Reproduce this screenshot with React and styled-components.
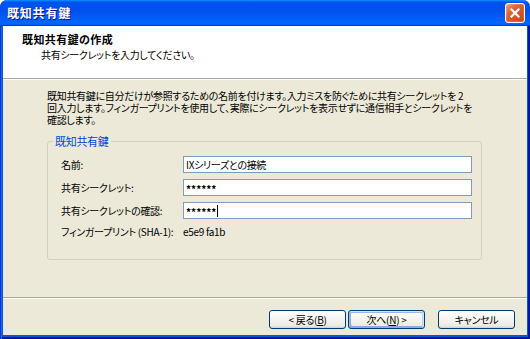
import React from 'react';
import styled, { createGlobalStyle, css } from 'styled-components';

const Global = createGlobalStyle`
  html, body { margin: 0; padding: 0; background: #fff; }
  body {
    font-family: "Noto Sans CJK JP", "Noto Sans", sans-serif;
    font-size: 10px;
    letter-spacing: -0.3px;
    font-feature-settings: "palt";
    color: #000;
  }
  #root { width: 530px; height: 339px; }
`;

const Window = styled.div`
  width: 530px;
  height: 339px;
  display: flex;
  flex-direction: column;
  border-radius: 7px 7px 0 0;
  overflow: hidden;
  background: #0855dd;
`;

const TitleBar = styled.div`
  flex: none;
  height: 26px;
  display: flex;
  align-items: center;
  padding: 0 5px 0 7px;
  box-sizing: border-box;
  background: linear-gradient(180deg, #0997ff, #0053ee 8%, #0050ee 40%, #06f 88%, #06f 93%, #005bff 95%, #003dd7 96%, #003dd7);
  color: #fff;
`;

const TitleText = styled.div`
  flex: 1;
  font-size: 12px;
  font-weight: 700;
  letter-spacing: 0.8px;
  line-height: 14px;
  text-shadow: 1px 1px #0f1089;
`;

const CloseButton = styled.div`
  width: 20px;
  height: 20px;
  box-sizing: border-box;
  border: 1px solid #fff;
  border-radius: 3px;
  display: flex;
  align-items: center;
  justify-content: center;
  background-color: #d9532b;
  background-image: linear-gradient(135deg, #f0a282 0%, #e3683f 30%, #d9532b 60%, #c7421b 100%);
  box-shadow: inset 0 0 0 1px rgba(255, 255, 255, 0.15);
`;

const Frame = styled.div`
  flex: 1;
  min-height: 0;
  display: flex;
  flex-direction: column;
  padding: 0 3px 4px 3px;
  box-shadow: inset 1px 0 #0831d9, inset 2px 0 #166aee, inset -1px 0 #00138c,
    inset -2px 0 #001ea0, inset 0 -1px #00138c, inset 0 -2px #001ea0;
`;

const Client = styled.div`
  flex: 1;
  display: flex;
  flex-direction: column;
  background: #ece9d8;
`;

const Header = styled.div`
  flex: none;
  height: 53px;
  box-sizing: border-box;
  background: #fff;
  border-bottom: 1px solid #aca899;
  padding: 6px 0 0 19px;
`;

const HeaderTitle = styled.div`
  font-size: 11px;
  font-weight: 700;
  letter-spacing: 0.4px;
  line-height: 14px;
`;

const HeaderSub = styled.div`
  margin-top: 2px;
  padding-left: 19px;
  line-height: 14px;
`;

const Body = styled.div`
  flex: 1;
  border-top: 1px solid #fff;
  padding: 10px 0 0 44px;
`;

const Description = styled.div`
  line-height: 12px;
  white-space: nowrap;
`;

const Group = styled.fieldset`
  margin: 9px 0 0 0;
  width: 435px;
  min-width: 0;
  box-sizing: border-box;
  border: 1px solid #d0d0bf;
  border-radius: 3px;
  padding: 0 0 20px 0;
`;

const Legend = styled.legend`
  margin-left: 5px;
  padding: 0 2px;
  color: #0046d5;
  font-size: 11px;
  line-height: 12px;
`;

const FormGrid = styled.div`
  display: grid;
  grid-template-columns: 122px 289px;
  row-gap: 6px;
  align-items: center;
  padding: 9px 0 0 13px;
`;

const Label = styled.div`
  line-height: 14px;
  white-space: nowrap;
`;

const Field = styled.div`
  height: 17px;
  box-sizing: border-box;
  border: 1px solid #7f9db9;
  background: #fff;
  padding: 0 2px;
  line-height: 15px;
  white-space: nowrap;
  display: flex;
  align-items: center;
`;

const Secret = styled.span`
  font-weight: 700;
  letter-spacing: 0;
  position: relative;
  top: 1px;
`;

const Caret = styled.span`
  display: inline-block;
  width: 1px;
  height: 12px;
  background: #000;
  margin-left: 1px;
`;

const Footer = styled.div`
  flex: none;
  height: 38px;
  box-sizing: border-box;
  border-top: 1px solid #aca899;
  box-shadow: inset 0 1px #fff;
  padding: 12px 12px 0 0;
  display: flex;
  justify-content: flex-end;
  align-items: flex-start;
`;

const Button = styled.div`
  width: 77px;
  height: 19px;
  box-sizing: border-box;
  border: 1px solid #003c74;
  border-radius: 3px;
  background: linear-gradient(180deg, #fff, #ecebe6 86%, #d6d0c5);
  line-height: 17px;
  text-align: center;
  white-space: nowrap;
  margin-right: ${(p) => p.$gap || 0}px;
  ${(p) =>
    p.$default &&
    css`
      box-shadow: inset -1px 1px #cee7ff, inset 1px 2px #98b8ea, inset -2px 2px #bcd4f6,
        inset 1px -1px #89ade4, inset 2px -2px #89ade4;
    `}
`;

export default function App() {
  return (
    <>
      <Global />
      <Window>
        <TitleBar>
          <TitleText>既知共有鍵</TitleText>
          <CloseButton>
            <svg width="12" height="12" viewBox="0 0 12 12">
              <path d="M2.5 2.5 L9.5 9.5 M9.5 2.5 L2.5 9.5" stroke="#fff" strokeWidth="2.2" strokeLinecap="square" fill="none" />
            </svg>
          </CloseButton>
        </TitleBar>
        <Frame>
          <Client>
            <Header>
              <HeaderTitle>既知共有鍵の作成</HeaderTitle>
              <HeaderSub>共有シークレットを入力してください。</HeaderSub>
            </Header>
            <Body>
              <Description>
                既知共有鍵に自分だけが参照するための名前を付けます。入力ミスを防ぐために共有シークレットを 2
                <br />
                回入力します。フィンガープリントを使用して、実際にシークレットを表示せずに通信相手とシークレットを
                <br />
                確認します。
              </Description>
              <Group>
                <Legend>既知共有鍵</Legend>
                <FormGrid>
                  <Label>名前:</Label>
                  <Field>IXシリーズとの接続</Field>
                  <Label>共有シークレット:</Label>
                  <Field>
                    <Secret>******</Secret>
                  </Field>
                  <Label>共有シークレットの確認:</Label>
                  <Field>
                    <Secret>******</Secret>
                    <Caret />
                  </Field>
                  <Label>フィンガープリント (SHA-1):</Label>
                  <Label>e5e9 fa1b</Label>
                </FormGrid>
              </Group>
            </Body>
            <Footer>
              <Button $gap={2}>
                &lt; 戻る(<u>B</u>)
              </Button>
              <Button $gap={13} $default>
                次へ(<u>N</u>) &gt;
              </Button>
              <Button>キャンセル</Button>
            </Footer>
          </Client>
        </Frame>
      </Window>
    </>
  );
}
